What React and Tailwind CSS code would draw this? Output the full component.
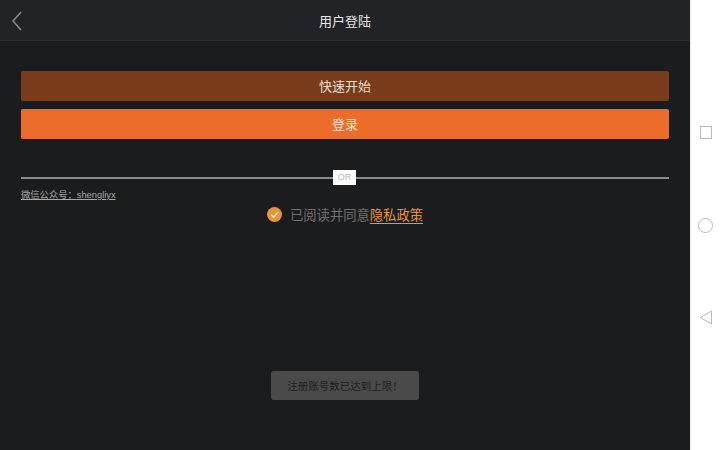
import React from "react";

export default function App() {
  const font = { fontFamily: '"Noto Sans CJK SC", "Noto Sans", sans-serif' };
  return (
    <div className="flex w-[720px] h-[450px] overflow-hidden" style={font}>
      <div className="flex flex-col w-[690px] h-full bg-[#1b1c1e]">
        <div className="relative flex items-center justify-center h-[41px] bg-[#222327] border-b border-[#2c2d31] shrink-0">
          <svg className="absolute left-[11px] top-[11px]" width="12" height="20" viewBox="0 0 12 20" fill="none">
            <path d="M10 1 L2 10 L10 19" stroke="#8a8b8e" strokeWidth="1.5" />
          </svg>
          <span className="text-[13px] text-[#e8e8e8] leading-none">用户登陆</span>
        </div>
        <div className="flex flex-col px-[21px] pt-[30px]">
          <div className="flex items-center justify-center h-[30px] rounded-[2px] bg-[#783c1a] text-[13px] text-[#e9ddd5]">
            快速开始
          </div>
          <div className="flex items-center justify-center h-[30px] mt-[8px] rounded-[2px] bg-[#ec6d2b] text-[13px] text-[#fbe8dc]">
            登录
          </div>
          <div className="relative mt-[38px] h-[2px] bg-[#8a8a8a]">
            <div className="absolute left-[312px] top-[-7px] w-[23px] h-[15px] bg-white flex items-center justify-center text-[9px] text-[#b5b5b5] leading-none" style={{ fontFamily: '"Liberation Sans", sans-serif' }}>
              OR
            </div>
          </div>
          <div className="mt-[11px] text-[9.3px] text-[#aaaaaa] underline leading-none">
            微信公众号：<span style={{ fontFamily: '"Liberation Sans", sans-serif' }}>shengliyx</span>
          </div>
          <div className="flex items-center justify-center mt-[7px] text-[13.3px] leading-none">
            <svg width="15" height="15" viewBox="0 0 16 16" className="mr-[8px]">
              <circle cx="8" cy="8" r="8" fill="#e8953a" />
              <path d="M4.3 8.2 L7 10.8 L11.8 5.6" stroke="#fbe6cf" strokeWidth="1.6" fill="none" />
            </svg>
            <span className="text-[#707070]">已阅读并同意</span>
            <span className="text-[#e8953a] underline underline-offset-[3px] decoration-1">隐私政策</span>
          </div>
        </div>
        <div className="flex justify-center mt-[149px]">
          <div className="flex items-center justify-center w-[148px] h-[29px] rounded-[3px] bg-[#4a4a4b] text-[10.5px] text-[#1e1e1e]">
            注册账号数已达到上限！
          </div>
        </div>
      </div>
      <div className="flex flex-col items-center w-[30px] h-full bg-white border-l border-[#eeeeee]">
        <div className="mt-[126px] w-[12px] h-[13px] border border-[#b8b8b8]" />
        <div className="mt-[79px] w-[15px] h-[15px] rounded-full border border-[#b8b8b8]" />
        <svg className="mt-[77px]" width="14" height="15" viewBox="0 0 14 15" fill="none">
          <path d="M12.5 1 L1.5 7.5 L12.5 14 Z" stroke="#b8b8b8" strokeWidth="1" />
        </svg>
      </div>
    </div>
  );
}
